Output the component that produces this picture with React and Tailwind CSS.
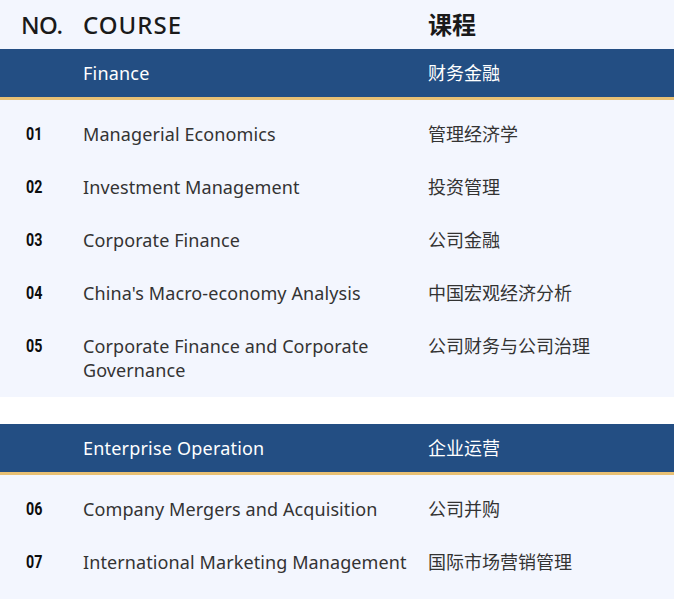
const sections = [
  {
    en: "Finance",
    zh: "财务金融",
    courses: [
      ["01", "Managerial Economics", "管理经济学"],
      ["02", "Investment Management", "投资管理"],
      ["03", "Corporate Finance", "公司金融"],
      ["04", "China's Macro-economy Analysis", "中国宏观经济分析"],
      ["05", "Corporate Finance and Corporate Governance", "公司财务与公司治理"],
    ],
  },
  {
    en: "Enterprise Operation",
    zh: "企业运营",
    courses: [
      ["06", "Company Mergers and Acquisition", "公司并购"],
      ["07", "International Marketing Management", "国际市场营销管理"],
    ],
  },
];

const font = { fontFamily: '"Noto Sans", "Noto Sans CJK SC", sans-serif' };

export default function App() {
  return (
    <div className="flex min-h-[599px] flex-col bg-white text-[#333333]" style={font}>
      <div className="grid h-[49px] grid-cols-[83px_345px_1fr] items-center bg-[#f3f6fe] text-[24px] font-medium text-[#1a1a1a]">
        <div className="pl-[21px] tracking-[-0.5px]">NO.</div>
        <div className="tracking-[1px]">COURSE</div>
        <div className="font-bold">课程</div>
      </div>

      {sections.map((s, i) => (
        <div key={s.en} className={i > 0 ? "mt-[27px] flex flex-1 flex-col" : ""}>
          <div className="box-content grid h-[48px] grid-cols-[83px_345px_1fr] items-center border-b-[3px] border-[#e8c074] bg-[#234e83] text-[18px] tracking-[0.2px] text-white">
            <div />
            <div>{s.en}</div>
            <div className="tracking-normal">{s.zh}</div>
          </div>
          <div className="flex-1 bg-[#f3f6fe] pt-[7px] pb-[1px]">
            {s.courses.map(([no, en, zh]) => (
              <div
                key={no}
                className="grid grid-cols-[83px_345px_1fr] py-[14.5px] text-[18px] leading-[24px]"
              >
                <div className="flex h-[24px] items-center pl-[26px]">
                  <span
                    className="inline-block origin-left scale-x-[0.75] text-[19px] font-bold leading-none text-[#0d0d0d]"
                    style={{ fontFamily: "Roboto, sans-serif" }}
                  >
                    {no}
                  </span>
                </div>
                <div className="pr-1 tracking-[0.1px]">{en}</div>
                <div>{zh}</div>
              </div>
            ))}
          </div>
        </div>
      ))}
    </div>
  );
}
